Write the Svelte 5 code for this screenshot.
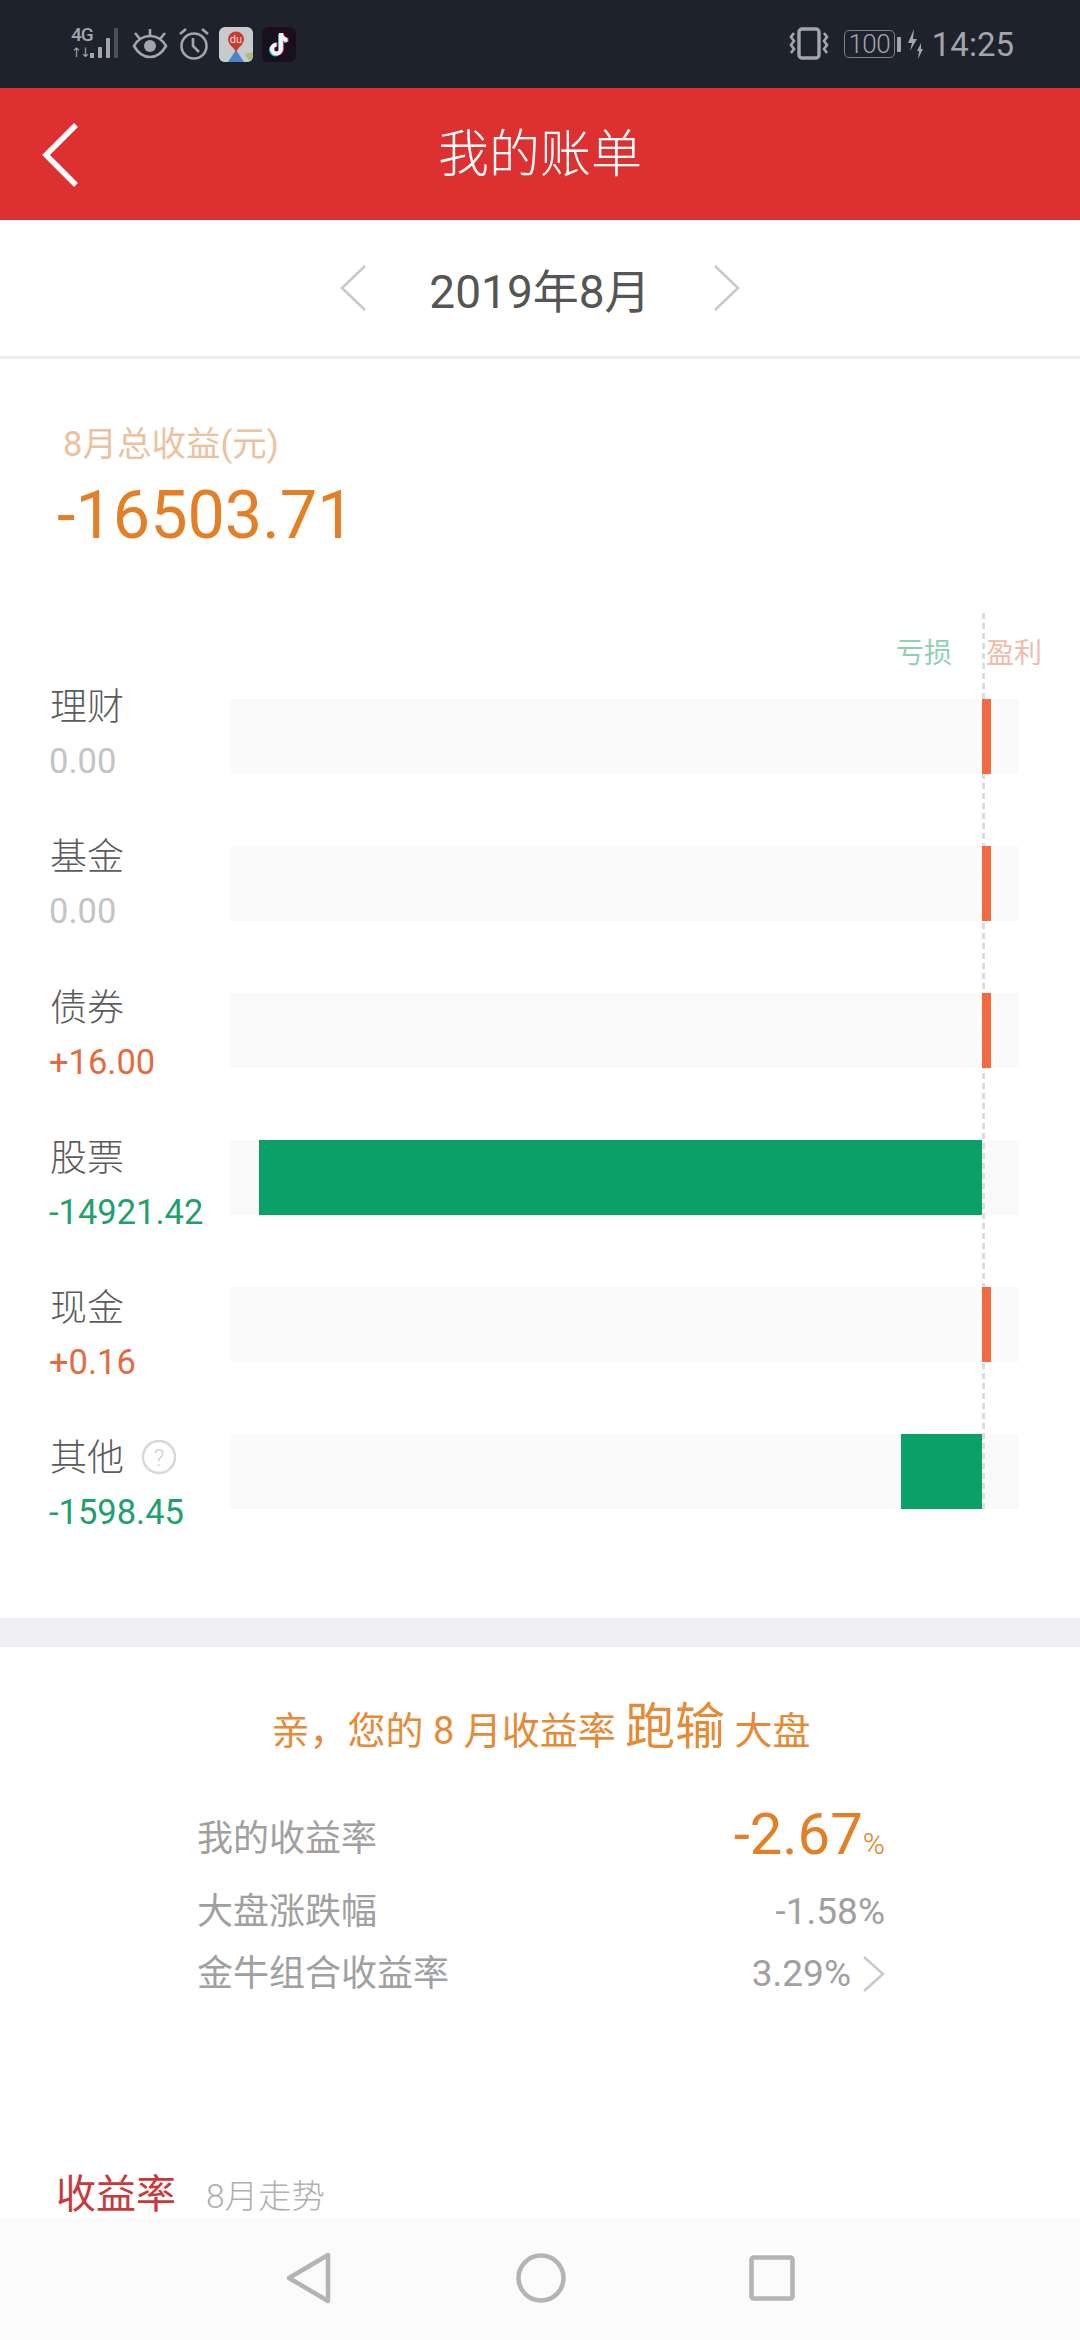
<script>
  // monthly bill, values in yuan
  const rows = [
    { name: "理财", value: "0.00", tone: "none", left: 982, right: 991 },
    { name: "基金", value: "0.00", tone: "none", left: 982, right: 991 },
    { name: "债券", value: "+16.00", tone: "up", left: 982, right: 991 },
    { name: "股票", value: "-14921.42", tone: "down", left: 259, right: 982 },
    { name: "现金", value: "+0.16", tone: "up", left: 982, right: 991 },
    { name: "其他", value: "-1598.45", tone: "down", left: 901, right: 982, help: true },
  ];
  const trackStart = 230;
</script>

<div class="page">
  <div class="status">
    <div class="status-left">
      <div class="net">
        <div class="net-text"><span>4G</span><span class="arrows">↑↓</span></div>
        <svg width="32" height="32" viewBox="0 0 32 32">
          <rect x="0" y="25" width="4" height="5" fill="#a3a5aa" />
          <rect x="8" y="19" width="4" height="11" rx="1" fill="#a3a5aa" />
          <rect x="16" y="10" width="4" height="20" rx="1" fill="#a3a5aa" />
          <rect x="24" y="0" width="4" height="30" rx="1" fill="#4d5058" />
        </svg>
      </div>
      <svg class="ico" width="36" height="32" viewBox="0 0 36 32" fill="none" stroke="#a3a5aa" stroke-width="2.6">
        <path d="M2 18c4-7 10-10 16-10s12 3 16 10c-4 7-10 11-16 11S6 25 2 18z" />
        <circle cx="18" cy="18" r="6" fill="#a3a5aa" stroke="none" />
        <path d="M18 1v6M3 5l5 6M33 5l-5 6" />
      </svg>
      <svg class="ico" width="32" height="32" viewBox="0 0 32 32" fill="none" stroke="#a3a5aa" stroke-width="2.6">
        <circle cx="16" cy="18" r="12.5" />
        <path d="M15 10v8l6 6M2 6l6-5M30 6l-6-5" />
      </svg>
      <svg class="app" width="34" height="35" viewBox="0 0 34 35">
        <rect width="34" height="35" rx="6" fill="#c9cacb" />
        <path d="M0 28l12-3h10l12 3v1a6 6 0 0 1-6 6H6a6 6 0 0 1-6-6z" fill="#c2ccc9" />
        <path d="M17 23l8 12H9z" fill="#4d83c9" />
        <path d="M26 27l8-2v5l-4 4z" fill="#a9bd80" />
        <path d="M17 25c-2-5-8-7-8-13a8 7.500 0 0 1 16 0c0 6-6 8-8 13z" fill="#c8392e" />
        <text x="17" y="16" class="du">du</text>
      </svg>
      <svg class="app" width="34" height="35" viewBox="0 0 34 35">
        <rect width="34" height="35" rx="6" fill="#1a0f1f" />
        <path d="M19 6v16a4.500 4.500 0 1 1-4.500-4.500M19 6c0 4 3 7 6.500 7" fill="none" stroke="#29c4c8" stroke-width="4" transform="translate(-1 1)" />
        <path d="M19 6v16a4.500 4.500 0 1 1-4.500-4.500M19 6c0 4 3 7 6.500 7" fill="none" stroke="#e8315a" stroke-width="4" transform="translate(1 0)" />
        <path d="M19 6v16a4.500 4.500 0 1 1-4.500-4.500M19 6c0 4 3 7 6.500 7" fill="none" stroke="#f4f4f4" stroke-width="4" />
      </svg>
    </div>
    <div class="status-right">
      <svg width="40" height="34" viewBox="0 0 40 34" fill="none" stroke="#a3a5aa">
        <rect x="10" y="2" width="20" height="29" rx="3" stroke-width="3.400" />
        <path d="M5 6l-3 4 3 4-3 4 3 4-3 4M35 6l3 4-3 4 3 4-3 4 3 4" stroke-width="2.600" />
      </svg>
      <div class="battery"><span class="level">100</span></div>
      <div class="cap"></div>
      <svg class="bolt" width="16" height="30" viewBox="0 0 16 30">
        <path d="M7 0L1 14h4l-2 8 7-12H6zM14 14l-4 8h2l-1 8 5-10h-2z" fill="#a3a5aa" />
      </svg>
      <span class="clock">14:25</span>
    </div>
  </div>

  <header class="bar">
    <svg class="back" width="40" height="64" viewBox="0 0 40 64" fill="none" stroke="#fff" stroke-width="5.500">
      <path d="M36 2L6 32l30 30" />
    </svg>
    <h1>我的账单</h1>
  </header>

  <div class="month">
    <svg width="30" height="46" viewBox="0 0 30 46" fill="none" stroke="#c8c9cb" stroke-width="2.500"><path d="M26 1L3 23l23 22" /></svg>
    <span>2019年8月</span>
    <svg width="30" height="46" viewBox="0 0 30 46" fill="none" stroke="#c8c9cb" stroke-width="2.500"><path d="M4 1l23 22L4 45" /></svg>
  </div>

  <section class="bill">
    <div class="total-label">8月总收益(元)</div>
    <div class="total">-16503.71</div>

    <div class="chart">
      <div class="zero"></div>
      <div class="legend"><span class="loss">亏损</span><span class="gain">盈利</span></div>
      <div class="chart-body">
        <div class="infos">
          {#each rows as row}
            <div class="info">
              <div class="name">
                {row.name}
                {#if row.help}
                  <svg width="36" height="36" viewBox="0 0 36 36" class="help">
                    <circle cx="18" cy="18" r="16" fill="none" stroke="#d8d8d8" stroke-width="2.500" />
                    <text x="18" y="27" class="q">?</text>
                  </svg>
                {/if}
              </div>
              <div class="value {row.tone}">{row.value}</div>
            </div>
          {/each}
        </div>
        <div class="tracks">
          {#each rows as row}
            <div class="track">
              <div
                class="fill {row.tone === 'down' ? 'neg' : 'pos'}"
                style="left: {row.left - trackStart}px; width: {row.right - row.left}px"
              ></div>
            </div>
          {/each}
        </div>
      </div>
    </div>
  </section>

  <div class="gap"></div>

  <section class="compare">
    <div class="verdict">亲，您的 8 月收益率 <b>跑输</b> 大盘</div>
    <div class="line first">
      <span>我的收益率</span>
      <span class="mine">-2.67<small>%</small></span>
    </div>
    <div class="line second">
      <span>大盘涨跌幅</span>
      <span>-1.58%</span>
    </div>
    <div class="line third">
      <span>金牛组合收益率</span>
      <span class="more">3.29%
        <svg width="24" height="36" viewBox="0 0 24 36" fill="none" stroke="#c8c9cb" stroke-width="2.500"><path d="M3 1l19 17L3 35" /></svg>
      </span>
    </div>
  </section>

  <div class="trend">
    <span class="trend-title">收益率</span>
    <span class="trend-sub">8月走势</span>
  </div>

  <nav class="nav">
    <svg width="48" height="52" viewBox="0 0 48 52" fill="none" stroke="#b4b4b4" stroke-width="4.500" stroke-linejoin="round">
      <path d="M43 3v46L4 26z" />
    </svg>
    <svg width="50" height="50" viewBox="0 0 50 50" fill="none" stroke="#b4b4b4" stroke-width="4.500">
      <circle cx="25" cy="25" r="22.500" />
    </svg>
    <svg width="46" height="46" viewBox="0 0 46 46" fill="none" stroke="#b4b4b4" stroke-width="4.500">
      <rect x="2.500" y="2.500" width="41" height="41" rx="2" />
    </svg>
  </nav>
</div>

<style>
  :global(body) {
    margin: 0;
    background: #fff;
  }
  .page {
    width: 1080px;
    height: 2340px;
    overflow: hidden;
    display: flex;
    flex-direction: column;
    font-family: Roboto, "Noto Sans CJK SC", sans-serif;
  }
  .status {
    height: 88px;
    flex: none;
    background: #1e222d;
    display: flex;
    justify-content: space-between;
    align-items: center;
    padding: 0 66px 0 71px;
    box-sizing: border-box;
  }
  .status-left,
  .status-right {
    display: flex;
    align-items: center;
  }
  .net {
    display: flex;
    align-items: center;
    gap: 1px;
  }
  .net-text {
    display: flex;
    flex-direction: column;
    font-size: 19px;
    line-height: 18px;
    font-weight: 500;
    letter-spacing: -1px;
    color: #a3a5aa;
    width: 18px;
  }
  .arrows {
    font-size: 13px;
    letter-spacing: -2px;
    font-family: "DejaVu Sans", sans-serif;
  }
  .ico {
    margin-left: 10px;
  }
  .app {
    margin-left: 9px;
  }
  .du {
    font-size: 11px;
    fill: #eedcd8;
    text-anchor: middle;
    font-family: Roboto, sans-serif;
  }
  .battery {
    width: 51px;
    height: 28px;
    margin-left: 15px;
    border: 1.5px solid #7e8188;
    border-radius: 5px;
    box-sizing: border-box;
    display: flex;
    align-items: center;
    justify-content: center;
  }
  .level {
    font-size: 26px;
    font-weight: 300;
    color: #a3a5aa;
    line-height: 1;
    letter-spacing: -0.5px;
  }
  .cap {
    width: 4px;
    height: 15px;
    margin-left: 2px;
    background: #a3a5aa;
    border-radius: 1px;
  }
  .bolt {
    margin-left: 6px;
  }
  .clock {
    margin-left: 9px;
    font-size: 33px;
    color: #a3a5aa;
  }
  .bar {
    height: 132px;
    flex: none;
    background: #dd3131;
    position: relative;
    display: flex;
    align-items: center;
    justify-content: center;
  }
  .back {
    position: absolute;
    left: 40px;
    top: 35px;
  }
  h1 {
    margin: 0;
    font-size: 51px;
    font-weight: 300;
    color: #fff;
    line-height: 1;
  }
  .month {
    height: 136px;
    flex: none;
    border-bottom: 3px solid #eeeeee;
    display: flex;
    align-items: center;
    justify-content: center;
    gap: 60px;
    font-size: 46px;
    color: #555;
    font-weight: 400;
  }
  .bill {
    height: 1259px;
    flex: none;
    padding-top: 62px;
    box-sizing: border-box;
  }
  .total-label {
    margin-left: 63px;
    font-size: 34.5px;
    line-height: 46px;
    color: #ebc29f;
  }
  .total {
    margin-left: 57px;
    margin-top: 9px;
    font-size: 66.5px;
    line-height: 78px;
    color: #e37f26;
  }
  .chart {
    position: relative;
    margin-top: 59px;
  }
  .zero {
    position: absolute;
    left: 982px;
    top: 0;
    width: 3px;
    height: 897px;
    background: repeating-linear-gradient(to bottom, #dcdce0 0 6px, transparent 6px 10px);
    z-index: 1;
  }
  .legend {
    height: 76px;
    display: flex;
    justify-content: flex-end;
    align-items: center;
    padding-right: 38px;
    font-size: 28px;
    gap: 34px;
  }
  .loss {
    color: #8fd1b6;
  }
  .gain {
    color: #f0bca9;
  }
  .chart-body {
    display: flex;
    margin-top: 10px;
  }
  .infos {
    width: 230px;
    flex: none;
    padding-left: 50px;
    box-sizing: border-box;
    margin-top: -11px;
  }
  .info {
    height: 150.3px;
  }
  .name {
    font-size: 37px;
    line-height: 40px;
    color: #5c5c5c;
    font-weight: 300;
    display: flex;
    align-items: center;
  }
  .help {
    margin-left: 17px;
    margin-top: -4px;
  }
  .q {
    font-size: 24px;
    fill: #d0d0d0;
    text-anchor: middle;
  }
  .value {
    margin-top: 13px;
    margin-left: -1px;
    font-size: 34.5px;
    line-height: 40px;
    white-space: nowrap;
  }
  .none {
    color: #c4c4c4;
  }
  .up {
    color: #e36b3f;
  }
  .down {
    color: #21a06e;
  }
  .tracks {
    display: flex;
    flex-direction: column;
    gap: 72px;
  }
  .track {
    width: 789px;
    height: 75px;
    background: #fafafa;
    position: relative;
  }
  .fill {
    position: absolute;
    top: 0;
    height: 100%;
    z-index: 2;
  }
  .pos {
    background: #f4663a;
    opacity: 0.97;
  }
  .neg {
    background: #0aa068;
  }
  .gap {
    height: 29px;
    flex: none;
    background: #efeff4;
  }
  .compare {
    height: 525px;
    flex: none;
    padding: 50px 195px 0 197px;
    box-sizing: border-box;
    font-size: 36px;
    color: #a0a0a0;
    font-weight: 400;
  }
  .verdict {
    margin: 0 -40px;
    text-align: center;
    font-size: 38px;
    line-height: 60px;
    color: #e58a36;
    font-weight: 400;
  }
  .verdict b {
    font-size: 50px;
    font-weight: 400;
  }
  .line {
    display: flex;
    justify-content: space-between;
    align-items: center;
    line-height: 50px;
  }
  .first {
    margin-top: 40px;
    height: 76px;
  }
  .second {
    margin-top: 10px;
    height: 50px;
  }
  .third {
    margin-top: 12px;
    height: 50px;
  }
  .second span:last-child,
  .more {
    font-size: 37px;
  }
  .mine {
    font-size: 58px;
    color: #e37f26;
  }
  .mine small {
    font-size: 30px;
    font-weight: 300;
  }
  .more {
    display: flex;
    align-items: center;
    gap: 10px;
  }
  .trend {
    height: 53px;
    flex: 1;
    padding-left: 56px;
    display: flex;
    align-items: baseline;
    gap: 30px;
    overflow: hidden;
    margin-top: -3px;
  }
  .trend-title {
    font-size: 40px;
    color: #c9393a;
    line-height: 48px;
  }
  .trend-sub {
    font-size: 33.5px;
    font-weight: 300;
    color: #b0b0b0;
  }
  .nav {
    height: 122px;
    flex: none;
    background: #fbfbfb;
    display: flex;
    align-items: center;
    justify-content: center;
    gap: 183px;
    padding-bottom: 3px;
    box-sizing: border-box;
  }
</style>
